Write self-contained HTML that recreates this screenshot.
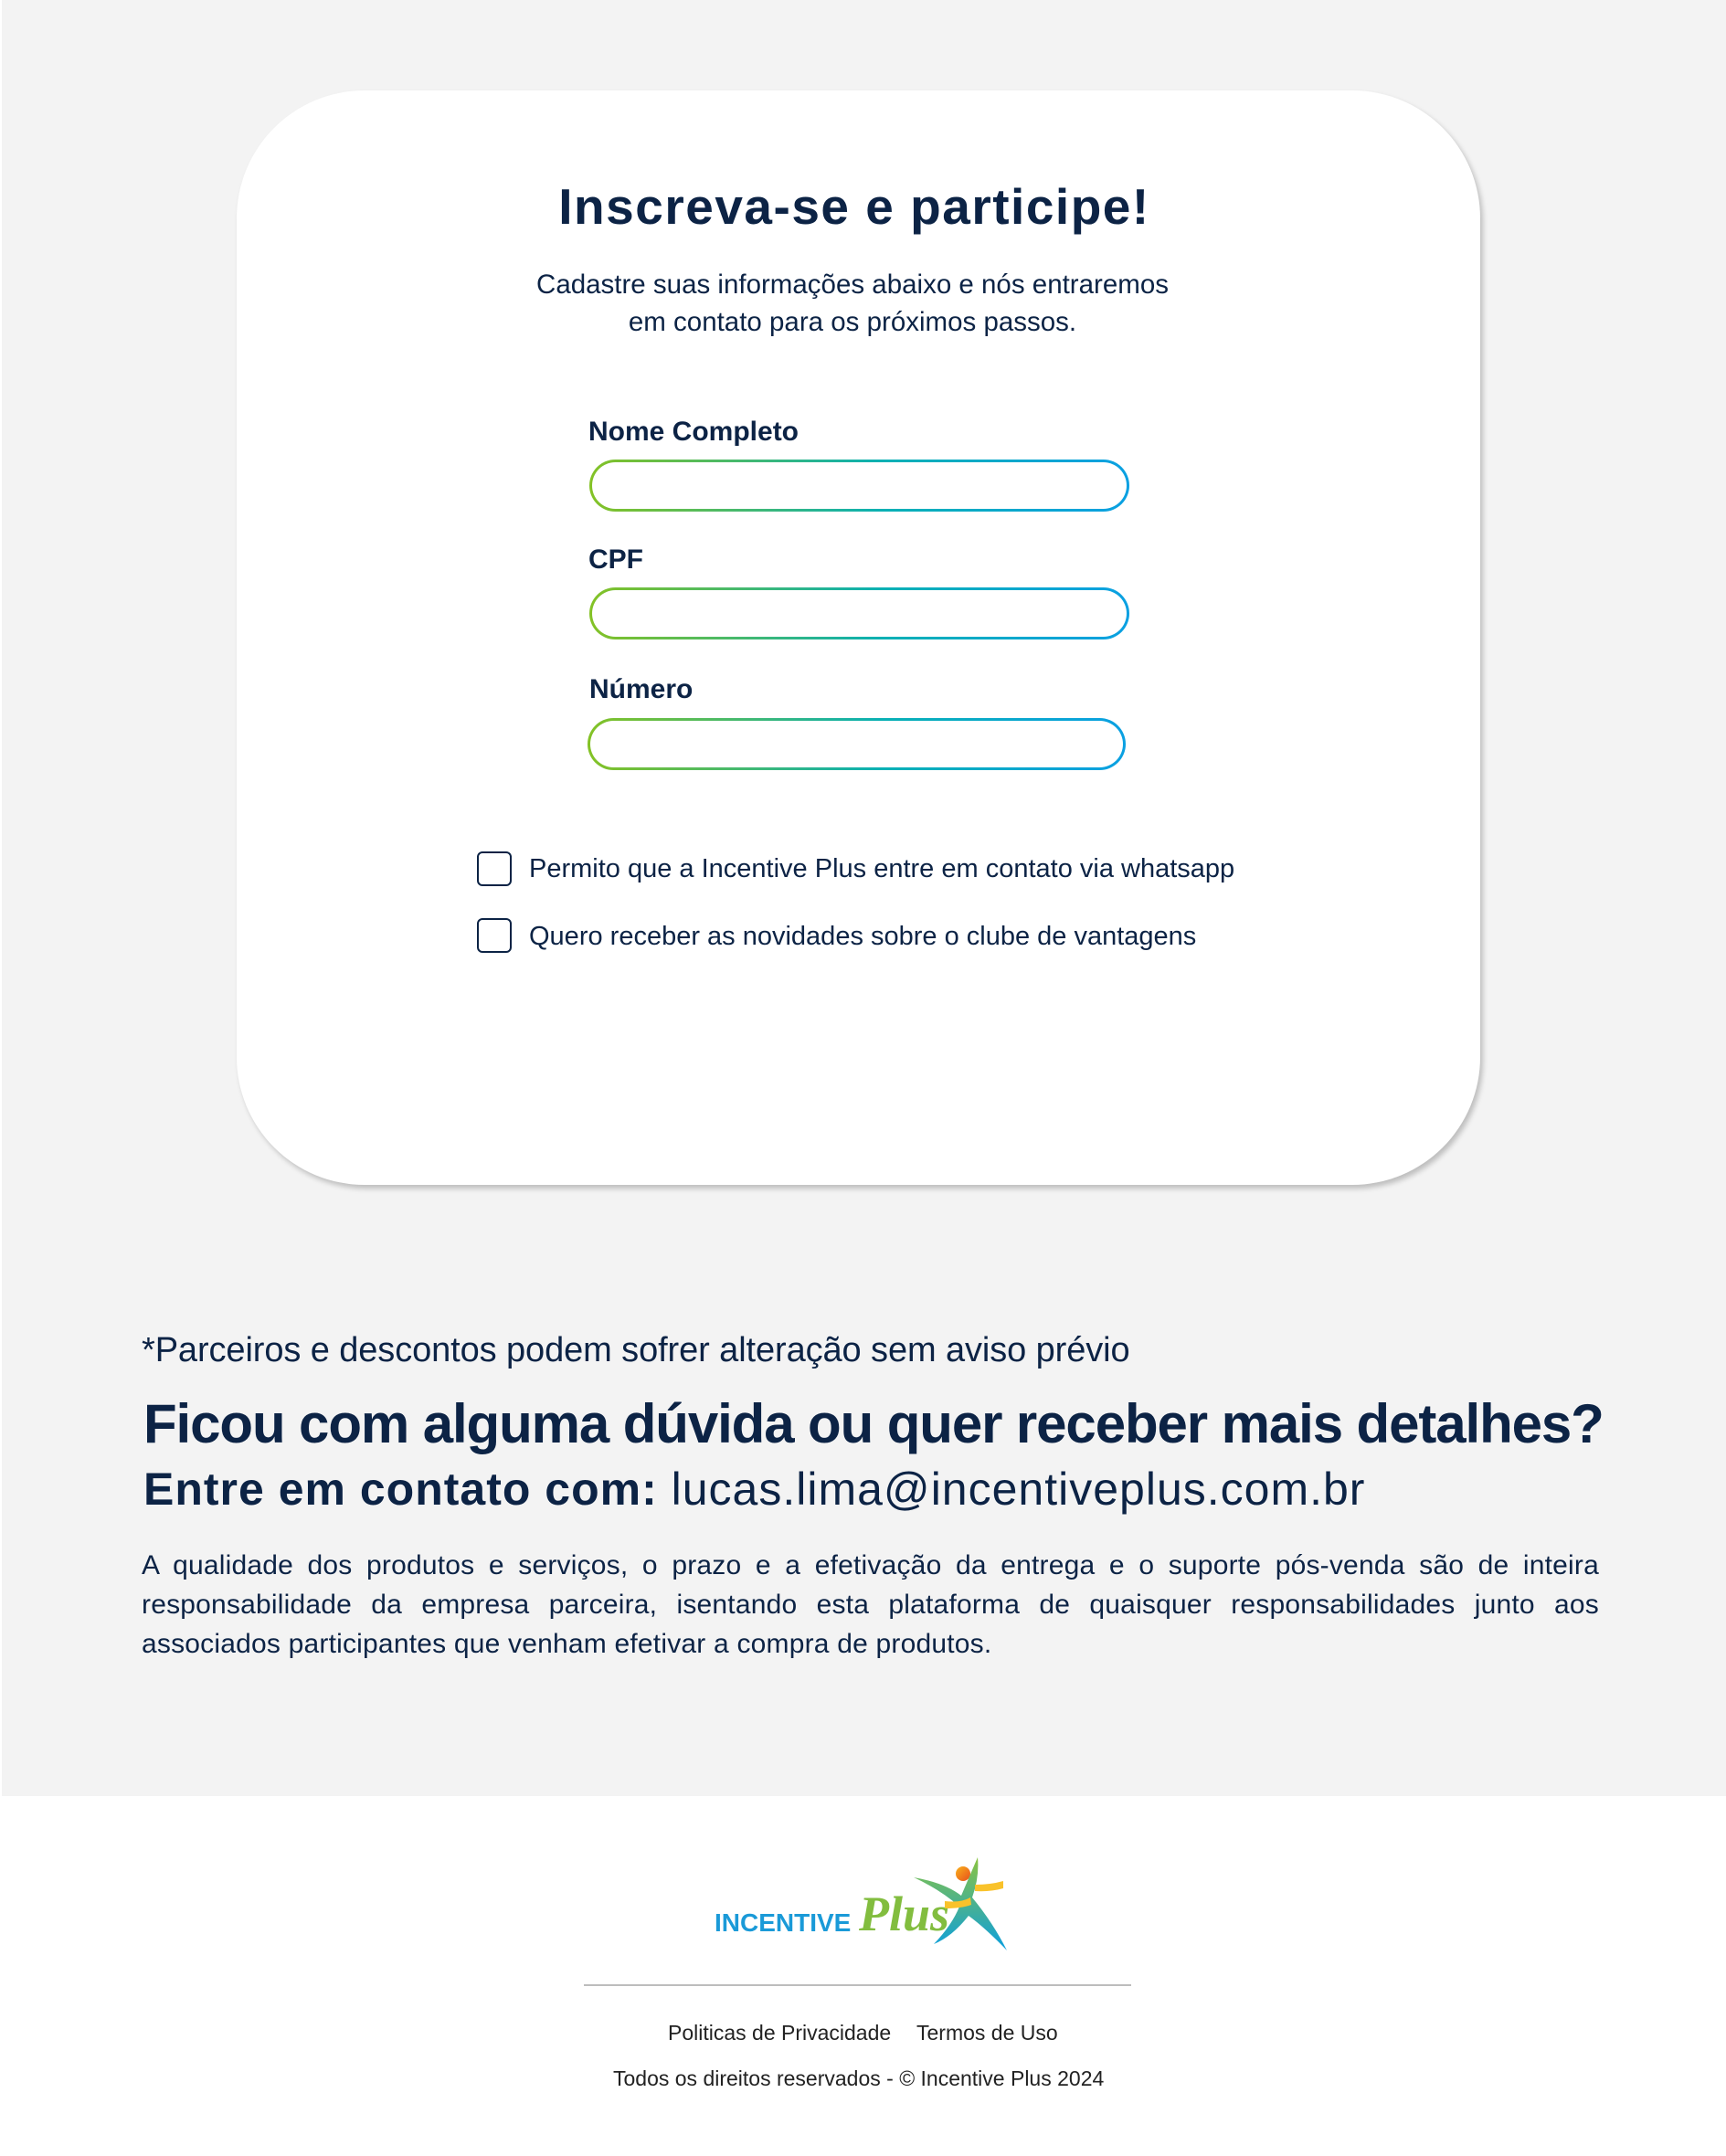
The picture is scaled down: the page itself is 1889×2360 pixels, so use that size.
<!DOCTYPE html>
<html><head><meta charset="utf-8">
<style>
*{margin:0;padding:0;box-sizing:border-box}
body{width:1889px;height:2360px;background:#fff;font-family:"Liberation Sans",sans-serif;color:#0c2345;position:relative;overflow:hidden}
.gray{position:absolute;left:2px;top:0;width:1887px;height:1966px;background:#f3f3f3}
.card{position:absolute;left:259px;top:99px;width:1361px;height:1198px;background:#fff;border-radius:140px;box-shadow:3px 4px 6px rgba(0,0,0,.22)}
.abs{position:absolute;white-space:nowrap}
.title{left:0;width:1870px;text-align:center;top:194px;font-size:55px;font-weight:bold;letter-spacing:1.5px}
.sub{left:0;width:1866px;text-align:center;top:291px;font-size:29.5px;line-height:41px}
.lbl{font-size:30px;font-weight:bold}
.inp{position:absolute;height:57px;border-radius:29px;border:3px solid transparent;background:linear-gradient(#fff,#fff) padding-box,linear-gradient(90deg,#84c225,#09b0b5 55%,#0aa0e2) border-box}
.cb{position:absolute;left:522px;width:38px;height:38px;border:2.5px solid #0c2345;border-radius:6px;background:#fff}
.cbt{left:579px;font-size:29px}
.note{left:155px;top:1457px;font-size:38px;letter-spacing:-0.1px}
.h1{left:157px;top:1524px;font-size:60px;font-weight:bold;letter-spacing:-1.1px}
.h2{left:157px;top:1601px;font-size:50px;letter-spacing:1px}
.p{position:absolute;left:155px;top:1692px;width:1595px;font-size:30px;line-height:43px;text-align:justify;text-align-last:left;letter-spacing:0.2px}
.line{position:absolute;left:639px;top:2172px;width:599px;height:2px;background:#bdbdbd}
.ft{font-size:23px;color:#222}
</style></head><body>
<div class="gray"></div>
<div class="card"></div>
<div class="abs title">Inscreva-se e participe!</div>
<div class="abs sub">Cadastre suas informações abaixo e nós entraremos<br>em contato para os próximos passos.</div>
<div class="abs lbl" style="left:644px;top:456px">Nome Completo</div>
<div class="inp" style="left:645px;top:503px;width:591px"></div>
<div class="abs lbl" style="left:644px;top:596px">CPF</div>
<div class="inp" style="left:645px;top:643px;width:591px"></div>
<div class="abs lbl" style="left:645px;top:738px">Número</div>
<div class="inp" style="left:643px;top:786px;width:589px"></div>
<div class="cb" style="top:932px"></div>
<div class="abs cbt" style="top:935px">Permito que a Incentive Plus entre em contato via whatsapp</div>
<div class="cb" style="top:1005px"></div>
<div class="abs cbt" style="top:1009px">Quero receber as novidades sobre o clube de vantagens</div>
<div class="abs note">*Parceiros e descontos podem sofrer alteração sem aviso prévio</div>
<div class="abs h1">Ficou com alguma dúvida ou quer receber mais detalhes?</div>
<div class="abs h2"><b>Entre em contato com:</b> lucas.lima@incentiveplus.com.br</div>
<div class="p">A qualidade dos produtos e serviços, o prazo e a efetivação da entrega e o suporte pós-venda são de inteira responsabilidade da empresa parceira, isentando esta plataforma de quaisquer responsabilidades junto aos associados participantes que venham efetivar a compra de produtos.</div>
<svg style="position:absolute;left:780px;top:2025px" width="340" height="115" viewBox="0 0 340 115">
<defs><linearGradient id="g" x1="0" y1="0" x2="0" y2="1"><stop offset="0" stop-color="#8bc43f"/><stop offset="1" stop-color="#0a9fe0"/></linearGradient>
<linearGradient id="o" x1="0" y1="0" x2="1" y2="1"><stop offset="0" stop-color="#f9b21b"/><stop offset="1" stop-color="#e84e1b"/></linearGradient></defs>
<text x="2" y="89" font-family="Liberation Sans" font-weight="bold" font-size="28" fill="#1a9ad8">INCENTIVE</text>
<text x="160" y="88" font-family="Liberation Serif" font-style="italic" font-weight="bold" font-size="54" fill="#82bd3f">Plus</text>
<g transform="translate(22,0)">
<circle cx="252" cy="26" r="8" fill="url(#o)"/>
<path d="M198 30 Q232 36 250 50 L268 8 Q270 30 262 52 Q285 80 300 110 Q276 85 258 72 Q240 95 220 103 Q240 82 248 62 Q228 44 198 30 Z" fill="url(#g)"/>
<path d="M232 56 Q250 58 260 52 L261 60 Q250 64 232 64 Z" fill="#f9c22a"/>
<path d="M265 38 Q282 38 296 34 L296 42 Q282 46 265 45 Z" fill="#f9c22a"/>
</g>
</svg>
<div class="line"></div>
<div class="abs ft" style="left:731px;top:2212px">Politicas de Privacidade</div>
<div class="abs ft" style="left:1003px;top:2212px">Termos de Uso</div>
<div class="abs ft" style="left:671px;top:2262px">Todos os direitos reservados - © Incentive Plus 2024</div>
</body></html>
